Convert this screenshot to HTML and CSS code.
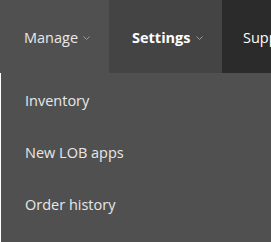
FILE: index.html
```html
<!DOCTYPE html>
<html lang="en">
<head>
    <meta charset="UTF-8">
    <meta name="viewport" content="width=device-width, initial-scale=1.0">
    <title>Store menu</title>
    <link rel="stylesheet" href="styles.css">
</head>
<body>
    <div class="nav">
        <div class="nav-item open">
            Manage
            <svg class="chevron" width="7" height="4" viewBox="0 0 7 4"><path d="M0.5 0.5 L3.5 3.5 L6.5 0.5" fill="none" stroke="currentColor" stroke-width="1"/></svg>
        </div>
        <div class="nav-item active">
            Settings
            <svg class="chevron" width="7" height="4" viewBox="0 0 7 4"><path d="M0.5 0.5 L3.5 3.5 L6.5 0.5" fill="none" stroke="currentColor" stroke-width="1"/></svg>
        </div>
        <div class="nav-item dark">Support</div>
    </div>

    <div class="dropdown">
        <a class="dropdown-item">Inventory</a>
        <a class="dropdown-item">New LOB apps</a>
        <a class="dropdown-item">Order history</a>
    </div>
</body>
</html>
```

FILE: styles.css
```css
* {
    margin: 0;
    padding: 0;
    box-sizing: border-box;
    font-family: "Open Sans", "Noto Sans", sans-serif;
}

body {
    background-color: #ffffff;
    width: 271px;
    height: 242px;
    overflow: hidden;
}

.nav {
    display: flex;
    height: 73px;
    width: 400px;
}

.nav-item {
    display: flex;
    align-items: center;
    padding-top: 1px;
    font-size: 14.5px;
    color: #e8e8e8;
    white-space: nowrap;
}

.nav-item.open {
    width: 109px;
    padding-left: 24px;
    background-color: #505050;
}

.nav-item.active {
    width: 113px;
    padding-left: 23px;
    background-color: #444444;
    font-weight: bold;
    color: #ffffff;
}

.nav-item.dark {
    padding-left: 21px;
    padding-right: 20px;
    background-color: #2b2b2b;
    color: #ffffff;
}

.chevron {
    margin-left: 5px;
    margin-top: 2px;
    color: #9a9a9a;
}

.dropdown {
    margin-left: 1px;
    height: 169px;
    background-color: #505050;
    padding-top: 18px;
}

.dropdown-item {
    display: block;
    height: 52px;
    padding-left: 24px;
    font-size: 14.5px;
    line-height: 20px;
    color: #e8e8e8;
}
```
